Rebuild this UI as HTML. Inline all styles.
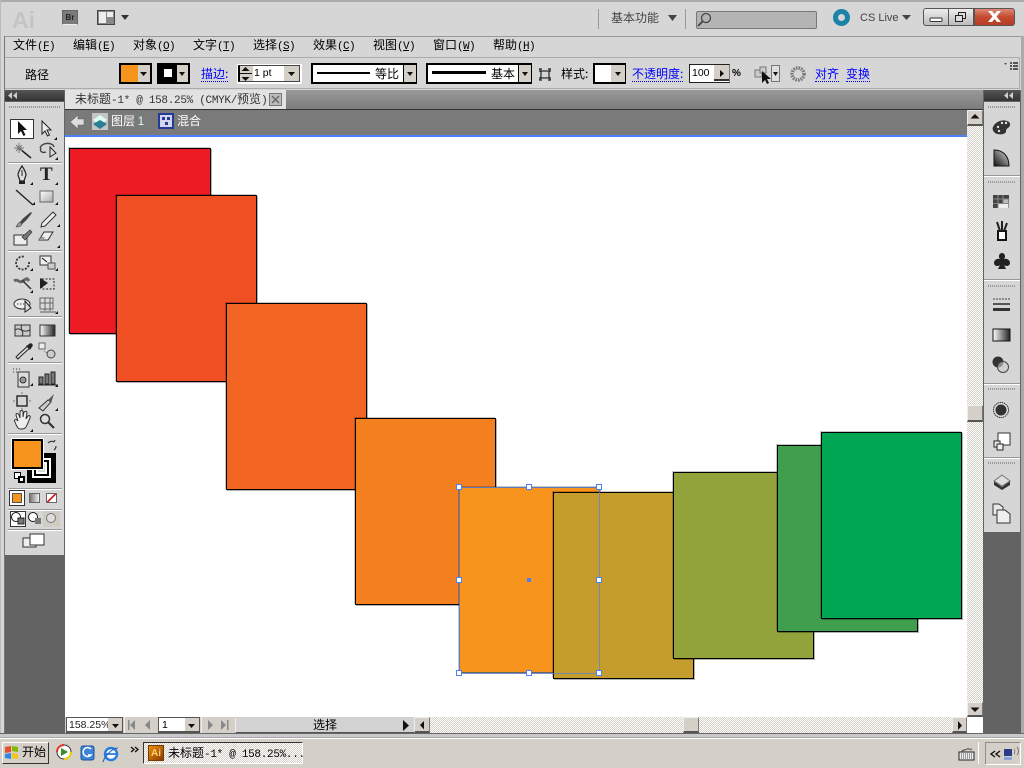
<!DOCTYPE html>
<html lang="zh"><head><meta charset="utf-8"><title>Illustrator</title>
<style>
html,body{margin:0;padding:0}
body{width:1024px;height:768px;position:relative;overflow:hidden;background:#d6d6d6;font:12px/14px "WenQuanYi Zen Hei","Noto Sans CJK SC","Liberation Sans",sans-serif;color:#000}
div,span.a{position:absolute;box-sizing:border-box}
.t{white-space:nowrap}
.m{top:38px;height:14px}
.m span{font:11px/14px "Liberation Mono",monospace;letter-spacing:-.6px}
.mono{font:11px/14px "Liberation Mono",monospace;letter-spacing:-.3px}
.l{color:#00f;border-bottom:1px dotted #00f;line-height:14px;white-space:nowrap}
.box{border:2px solid #000;background:#fff}
.s{border:2px solid #000}
.sep{left:8px;width:54px;height:2px;background:#fff;border-top:1px solid #999}
.ck{background:repeating-conic-gradient(#fff 0 25%,#d4d0c8 0 50%) 0 0/2px 2px}
.h{width:6px;height:6px;background:#fff;border:1px solid #4f80f0}
.sb{background:#d4d0c8;border-right:1px solid #777;border-bottom:2px solid #555;border-top:1px solid #eee;border-left:1px solid #eee}
.r{border:1px solid #000;box-shadow:-1px -1px 0 rgba(0,0,0,.22),1px 1px 0 rgba(0,0,0,.3)}
.dot{height:2px;background:repeating-linear-gradient(90deg,#999 0 1px,transparent 1px 2px)}
svg{position:absolute;left:0;top:0}
</style></head><body>

<!-- window frame -->
<div style="left:0;top:0;width:1024px;height:2px;background:#aaa"></div>
<div style="left:5px;top:36px;width:1019px;height:1px;background:#999"></div>
<div style="left:4px;top:57px;width:1016px;height:32px;border:1px solid #aaa;border-left:1px solid #777;background:#d6d6d6"></div>
<div style="left:0;top:0;width:1px;height:738px;background:#bbb"></div>
<div style="left:4px;top:36px;width:1px;height:698px;background:#777"></div>
<div style="left:1021px;top:36px;width:3px;height:700px;background:#aaa"></div>

<div class="t" style="left:12px;top:7px;font:bold 23px/26px 'Liberation Sans',sans-serif;color:#c4c4c4">Ai</div>
<div style="left:62px;top:10px;width:16px;height:15px;background:#7b7b7b;border:1px solid #666;border-bottom-color:#eee;color:#222;font:bold 8px/13px 'Liberation Sans',sans-serif;text-align:center">Br</div>
<div style="left:97px;top:10px;width:18px;height:15px;border:1px solid #444;background:#888"></div>
<div style="left:99px;top:12px;width:7px;height:11px;background:#eee"></div>
<div style="left:107px;top:12px;width:6px;height:5px;background:#eee"></div>
<div class="t" style="left:611px;top:11px;color:#444">基本功能</div>
<div style="left:598px;top:9px;width:1px;height:20px;background:#999"></div>
<div style="left:685px;top:9px;width:1px;height:20px;background:#999"></div>
<div style="left:696px;top:11px;width:121px;height:18px;background:#b4b4b4;border:1px solid #777;border-radius:2px"></div>
<div class="t" style="left:860px;top:11px;color:#444;font:11px/14px 'Liberation Sans',sans-serif">CS Live</div>
<div style="left:923px;top:8px;width:26px;height:18px;background:linear-gradient(#eee,#bbb);border:1px solid #555;border-radius:3px 0 0 3px"></div>
<div style="left:948px;top:8px;width:26px;height:18px;background:linear-gradient(#eee,#bbb);border:1px solid #555"></div>
<div style="left:974px;top:8px;width:41px;height:18px;background:linear-gradient(#dd8a76,#c34a30 50%,#b83d26);border:1px solid #555;border-radius:0 3px 3px 0"></div>

<!-- menu -->
<div class="t m" style="left:13px">文件<span>(<u>F</u>)</span></div>
<div class="t m" style="left:73px">编辑<span>(<u>E</u>)</span></div>
<div class="t m" style="left:133px">对象<span>(<u>O</u>)</span></div>
<div class="t m" style="left:193px">文字<span>(<u>T</u>)</span></div>
<div class="t m" style="left:253px">选择<span>(<u>S</u>)</span></div>
<div class="t m" style="left:313px">效果<span>(<u>C</u>)</span></div>
<div class="t m" style="left:373px">视图<span>(<u>V</u>)</span></div>
<div class="t m" style="left:433px">窗口<span>(<u>W</u>)</span></div>
<div class="t m" style="left:493px">帮助<span>(<u>H</u>)</span></div>

<!-- control bar -->
<div class="t" style="left:25px;top:68px">路径</div>
<div class="s" style="left:119px;top:63px;width:33px;height:21px;background:#d4d0c8"><div style="left:0;top:0;width:17px;height:17px;background:#f7941d"></div></div>
<div class="s" style="left:157px;top:63px;width:33px;height:21px;background:#d4d0c8"><div style="left:0;top:0;width:18px;height:17px;background:#000"></div><div style="left:5px;top:4px;width:8px;height:8px;background:#fff"></div></div>
<div class="l" style="left:201px;top:67px">描边:</div>
<div style="left:237px;top:64px;width:65px;height:20px;background:#fff"></div>
<div style="left:238px;top:65px;width:62px;height:17px;background:#d4d0c8;border:1px solid #444;border-left:2px solid #000"></div>
<div style="left:253px;top:66px;width:31px;height:15px;background:#fff;font:10.5px/15px 'Liberation Sans',sans-serif;padding-left:1px">1 pt</div>
<div class="box" style="left:311px;top:63px;width:106px;height:21px"></div>
<div style="left:317px;top:72px;width:53px;height:2px;background:#000"></div>
<div class="t" style="left:375px;top:67px">等比</div>
<div style="left:403px;top:65px;width:13px;height:17px;background:#d4d0c8;border-left:1px solid #000"></div>
<div class="box" style="left:426px;top:63px;width:106px;height:21px"></div>
<div style="left:432px;top:71px;width:54px;height:3px;background:#000"></div>
<div class="t" style="left:491px;top:67px">基本</div>
<div style="left:518px;top:65px;width:13px;height:17px;background:#d4d0c8;border-left:1px solid #000"></div>
<div class="t" style="left:561px;top:67px">样式:</div>
<div class="box" style="left:593px;top:63px;width:33px;height:21px"></div>
<div style="left:611px;top:65px;width:14px;height:17px;background:#d4d0c8"></div>
<div class="l" style="left:632px;top:67px">不透明度:</div>
<div style="left:689px;top:64px;width:41px;height:19px;background:#fff;border:1px solid #222;border-right-color:#777;font:10.5px/16px 'Liberation Sans',sans-serif;padding-left:2px">100</div>
<div style="left:714px;top:65px;width:15px;height:16px;background:#d4d0c8;border-bottom:2px solid #333"></div>
<div class="t" style="left:732px;top:67px;font:bold 10px/14px 'Liberation Sans',sans-serif">%</div>
<div style="left:771px;top:65px;width:9px;height:17px;background:#ddd;border:1px solid #777"></div>
<div class="l" style="left:815px;top:67px">对齐</div>
<div class="l" style="left:846px;top:67px">变换</div>

<!-- left dock -->
<div style="left:5px;top:90px;width:60px;height:644px;background:#636363"></div>
<div style="left:5px;top:90px;width:59px;height:11px;background:linear-gradient(#555,#333)"></div>
<div style="left:5px;top:102px;width:59px;height:453px;background:#d6d6d6"></div>
<div class="dot" style="left:9px;top:106px;width:51px"></div>
<div style="left:10px;top:119px;width:24px;height:20px;background:#fff;border:1px solid #333"></div>
<div class="sep" style="top:162px"></div>
<div class="sep" style="top:250px"></div>
<div class="sep" style="top:316px"></div>
<div class="sep" style="top:362px"></div>
<div class="sep" style="top:433px"></div>
<div class="sep" style="top:488px"></div>
<div class="sep" style="top:509px"></div>
<div class="sep" style="top:529px"></div>
<div class="t" style="left:40px;top:165px;font:bold 19px/20px 'Liberation Serif',serif;color:#222">T</div>
<!-- fill/stroke -->
<div style="left:27px;top:453px;width:29px;height:30px;background:#000"></div>
<div style="left:32px;top:458px;width:19px;height:20px;border:2px solid #fff;background:#000"></div>
<div style="left:36px;top:462px;width:11px;height:12px;background:#d6d6d6;border:2px solid #fff"></div>
<div style="left:12px;top:439px;width:31px;height:30px;background:#f7941d;border:2px solid #000;outline:1px solid #fff"></div>
<div style="left:14px;top:472px;width:7px;height:7px;background:#fff;border:1px solid #000"></div>
<div style="left:18px;top:476px;width:7px;height:7px;background:#fff;border:2px solid #000"></div>
<div style="left:9px;top:490px;width:16px;height:16px;background:#fff;border:1px solid #333"></div>
<div style="left:12px;top:493px;width:10px;height:10px;background:#f7941d;border:1px solid #555"></div>
<div style="left:29px;top:493px;width:11px;height:10px;background:linear-gradient(90deg,#777,#eee);border:1px solid #666"></div>
<div style="left:46px;top:493px;width:11px;height:10px;background:linear-gradient(135deg,#fff 42%,#d2202f 42% 58%,#fff 58%);border:1px solid #666"></div>
<div style="left:10px;top:511px;width:16px;height:16px;background:#fff;border:1px solid #333"></div>
<div style="left:43px;top:511px;width:17px;height:16px;background:#cfccc4"></div>

<!-- right dock -->
<div style="left:983px;top:90px;width:38px;height:644px;background:#636363"></div>
<div style="left:984px;top:90px;width:36px;height:11px;background:linear-gradient(#555,#333)"></div>
<div style="left:984px;top:102px;width:36px;height:430px;background:#d6d6d6"></div>
<div style="left:984px;top:175px;width:36px;height:2px;background:#999;border-bottom:1px solid #fff"></div>
<div style="left:984px;top:279px;width:36px;height:2px;background:#999;border-bottom:1px solid #fff"></div>
<div style="left:984px;top:383px;width:36px;height:2px;background:#999;border-bottom:1px solid #fff"></div>
<div style="left:984px;top:457px;width:36px;height:2px;background:#999;border-bottom:1px solid #fff"></div>
<div class="dot" style="left:988px;top:106px;width:27px"></div>
<div class="dot" style="left:988px;top:181px;width:27px"></div>
<div class="dot" style="left:988px;top:285px;width:27px"></div>
<div class="dot" style="left:988px;top:388px;width:27px"></div>
<div class="dot" style="left:988px;top:462px;width:27px"></div>

<!-- tab area -->
<div style="left:65px;top:90px;width:918px;height:19px;background:linear-gradient(#999,#7c7c7c)"></div>
<div style="left:65px;top:90px;width:221px;height:19px;background:#e2e2e2"></div>
<div class="t" style="left:75px;top:92px;color:#333">未标题<span class="mono">-1* @ 158.25% (CMYK/</span>预览<span class="mono">)</span></div>
<div style="left:269px;top:93px;width:13px;height:13px;background:#bbb;border:1px solid #777"></div>
<div style="left:65px;top:109px;width:918px;height:1px;background:#333"></div>
<div style="left:65px;top:110px;width:918px;height:26px;background:#7a7a7a"></div>
<div style="left:65px;top:135px;width:902px;height:2px;background:#4d80ff"></div>
<div class="t" style="left:111px;top:114px;color:#fff">图层 <span style="font:11.5px/14px 'Liberation Sans',sans-serif;color:#dff">1</span></div>
<div class="t" style="left:177px;top:114px;color:#fff">混合</div>
<div style="left:92px;top:113px;width:16px;height:17px;background:#c5c5c5"></div>
<div style="left:158px;top:113px;width:16px;height:16px;background:#d5d5ee;border:2px solid #223c96"></div>
<div style="left:162px;top:117px;width:3px;height:3px;background:#223c96"></div>
<div style="left:167px;top:117px;width:3px;height:3px;background:#223c96"></div>
<div style="left:165px;top:122px;width:3px;height:3px;background:#223c96"></div>

<!-- canvas -->
<div style="left:65px;top:137px;width:902px;height:580px;background:#fff"></div>
<div class="r" style="left:69px;top:148px;width:142px;height:186px;background:#ed1c24"></div>
<div class="r" style="left:116px;top:195px;width:141px;height:187px;background:#f04e23"></div>
<div class="r" style="left:226px;top:303px;width:141px;height:187px;background:#f36523"></div>
<div class="r" style="left:355px;top:418px;width:141px;height:187px;background:#f58020"></div>
<div class="r" style="left:459px;top:487px;width:141px;height:186px;background:#f7941d;border-color:#666"></div>
<div class="r" style="left:553px;top:492px;width:141px;height:187px;background:#c49d2d"></div>
<div class="r" style="left:673px;top:472px;width:141px;height:187px;background:#93a33c"></div>
<div class="r" style="left:777px;top:445px;width:141px;height:187px;background:#3f9f4e"></div>
<div class="r" style="left:821px;top:432px;width:141px;height:187px;background:#00a651"></div>
<!-- selection -->
<div style="left:459px;top:487px;width:141px;height:187px;border:1px solid rgba(91,130,216,.75)"></div>
<div class="h" style="left:456px;top:484px"></div><div class="h" style="left:526px;top:484px"></div><div class="h" style="left:596px;top:484px"></div>
<div class="h" style="left:456px;top:577px"></div><div class="h" style="left:596px;top:577px"></div>
<div class="h" style="left:456px;top:670px"></div><div class="h" style="left:526px;top:670px"></div><div class="h" style="left:596px;top:670px"></div>
<div style="left:527px;top:578px;width:4px;height:4px;background:#4f80f0"></div>

<!-- v scrollbar -->
<div class="ck" style="left:967px;top:110px;width:16px;height:607px"></div>
<div class="sb" style="left:967px;top:110px;width:16px;height:16px"></div>
<div class="sb" style="left:967px;top:405px;width:16px;height:17px"></div>
<div class="sb" style="left:967px;top:702px;width:16px;height:15px"></div>
<div style="left:967px;top:717px;width:16px;height:16px;background:#fff"></div>

<!-- status bar -->
<div style="left:65px;top:717px;width:902px;height:16px;background:#d4d0c8"></div>
<div class="ck" style="left:430px;top:717px;width:522px;height:16px"></div>
<div class="sb" style="left:683px;top:717px;width:16px;height:16px"></div>
<div class="sb" style="left:952px;top:717px;width:15px;height:16px"></div>
<div class="sb" style="left:414px;top:717px;width:16px;height:16px"></div>
<div style="left:66px;top:717px;width:57px;height:16px;background:#fff;border:1px solid #555;border-width:1px 1px 2px 1px;font:10.5px/14px 'Liberation Sans',sans-serif;padding-left:2px;color:#222">158.25%</div>
<div style="left:108px;top:718px;width:14px;height:13px;background:#d4d0c8"></div>
<div style="left:158px;top:717px;width:42px;height:16px;background:#fff;border:1px solid #555;border-width:1px 1px 2px 1px;font:10.5px/14px 'Liberation Sans',sans-serif;padding-left:3px">1</div>
<div style="left:185px;top:718px;width:14px;height:13px;background:#d4d0c8"></div>
<div style="left:124px;top:717px;width:1px;height:16px;background:#eee"></div>
<div style="left:201px;top:717px;width:1px;height:16px;background:#eee"></div>
<div style="left:235px;top:718px;width:179px;height:15px;background:#d2d2d2;border-left:1px solid #eee;border-bottom:1px solid #555"></div>
<div class="t" style="left:313px;top:718px">选择</div>

<!-- bottom frame -->
<div style="left:0;top:733px;width:1024px;height:1px;background:#666"></div>
<div style="left:0;top:734px;width:1024px;height:4px;background:#c9c9c9;border-bottom:1px solid #aaa"></div>

<!-- taskbar -->
<div style="left:0;top:738px;width:1024px;height:30px;background:#d4d0c8;border-top:1px solid #fff"></div>
<div style="left:2px;top:742px;width:47px;height:22px;background:#d4d0c8;border:1px solid #fff;border-right:1px solid #333;border-bottom:1px solid #333"></div>
<div class="t" style="left:22px;top:745px">开始</div>
<div class="ck" style="left:143px;top:742px;width:160px;height:22px;border:1px solid #333;border-right-color:#fff;border-bottom-color:#fff"></div>
<div style="left:148px;top:745px;width:16px;height:16px;background:linear-gradient(135deg,#e8900c,#8a3a00);color:#ffcf70;font:bold 10px/16px 'Liberation Sans',sans-serif;text-align:center;border:1px solid #7a3a00">Ai</div>
<div class="t" style="left:168px;top:746px">未标题<span class="mono">-1* @ 158.25%...</span></div>
<div style="left:978px;top:742px;width:1px;height:22px;background:#999;border-right:1px solid #fff"></div>
<div style="left:985px;top:742px;width:36px;height:23px;border:1px solid #8f8f8f;border-right-color:#fff;border-bottom-color:#fff"></div>

<!-- icons -->
<svg width="1024" height="768" viewBox="0 0 1024 768">
<defs><g id="tr"><path d="M0 3 L3 3 L3 0 Z" fill="#111"/></g></defs>
<!-- top bar -->
<path d="M121 15h8l-4 5z" fill="#333"/>
<path d="M668 15h9l-4.500 6z" fill="#444"/>
<circle cx="841.500" cy="17.500" r="6" fill="none" stroke="#1b82a8" stroke-width="5"/>
<path d="M902 15h9l-4.500 5z" fill="#444"/>
<g fill="none" stroke="#444" stroke-width="1.300"><circle cx="706" cy="18" r="4.500"/><path d="M702.500 21.500l-4.500 4.500" stroke-width="1.800"/></g>
<rect x="930" y="18" width="12" height="3.500" rx="1" fill="#fff" stroke="#333"/>
<g fill="#ddd" stroke="#222"><rect x="958.500" y="12.500" width="7" height="6"/><rect x="955.500" y="15.500" width="7" height="6"/></g>
<path d="M988 11l4 0 2.500 3 2.500-3 4 0-4.500 5.500 4.500 5.500-4 0-2.500-3-2.500 3-4 0 4.500-5.500z" fill="#fff"/>
<!-- control bar -->
<g fill="#111"><path d="M140 72h7l-3.500 4z"/><path d="M179 72h6l-3 4z"/><path d="M288 72h7l-3.500 4z"/><path d="M407 72h6l-3 4z"/><path d="M522 72h6l-3 4z"/><path d="M615 72h6l-3 4z"/><path d="M773 72h5l-2.500 4z"/><path d="M720 70l4 3.500-4 3.500z"/></g>
<rect x="284.500" y="66.500" width="15" height="14" fill="#d4d0c8" fill-opacity="0"/>
<g fill="#111"><path d="M245.500 67l4 4h-8z"/><path d="M245.500 81l4-4h-8z"/><rect x="240" y="73" width="12" height="1"/></g>
<g fill="none" stroke="#222" stroke-width="1.200"><rect x="541" y="71" width="8" height="7"/><path d="M539 69h3M548 69h3M539 80h3M548 80h3M540 69v3M550 69v3M540 77v3M550 77v3"/></g>
<rect x="755" y="70" width="7" height="7" fill="#ccc" stroke="#777"/><rect x="760" y="67" width="6" height="6" fill="#ccc" stroke="#777"/>
<path d="M762 71l0 12 3-3 2 4 2-1-2-4 4 0z" fill="#111"/>
<circle cx="798" cy="74" r="6" fill="none" stroke="#777" stroke-width="3.500" stroke-dasharray="1.600 1"/>
<g fill="#555"><path d="M1004 63h3l-1.500 2z"/><path d="M1010 62h2v2h-2zM1013 62h5v2h-5zM1010 65h2v2h-2zM1013 65h5v2h-5zM1010 68h2v2h-2zM1013 68h5v2h-5z"/></g>
<g fill="#ccc"><path d="M12 92l-4 3.500 4 3.500zM17 92l-4 3.500 4 3.500z"/><path d="M1008 92l-4 3.500 4 3.500zM1013 92l-4 3.500 4 3.500z"/></g>
<!-- breadcrumb -->
<path d="M70 122l8-7v4h6v6h-6v4z" fill="#ddd" stroke="#666" stroke-width=".6"/>
<path d="M100 115l7 5-7 5-7-5z" fill="#dfe"/><path d="M100 120l7 4-7 5-7-5z" fill="#2b7f93"/>
<!-- tab close -->
<path d="M272 96l7 7M279 96l-7 7" stroke="#666" stroke-width="1.400"/>
<!-- tools -->
<path d="M18 121v13l3-3 2.500 5 2-1-2.500-5h4z" fill="#111"/>
<path d="M42 121v13l3-3 2.500 5 2-1-2.500-5h4z" fill="#eee" stroke="#222"/>
<path d="M20 149l11 9" stroke="#222" stroke-width="1.500"/>
<path d="M16 145l6 6M22 145l-6 6M19 143v10M14 148h10" stroke="#777" stroke-width="1"/>
<path d="M40 148c2-6 13-6 14-1" fill="none" stroke="#444" stroke-width="1.400"/><path d="M41 148c-2 4 2 5 5 4" fill="none" stroke="#444" stroke-width="1.400"/><path d="M50 147v10l6-4z" fill="#ddd" stroke="#222"/>
<path d="M22 166c-2 3-4 7-4 9l2 6h4l2-6c0-2-2-6-4-9z" fill="#ddd" stroke="#222" stroke-width="1.200"/><path d="M22 170v6" stroke="#222"/><rect x="19" y="181" width="6" height="3" fill="#222"/>
<path d="M16 190l17 15" stroke="#222" stroke-width="1.400"/>
<rect x="40" y="191" width="13" height="11" fill="url(#g1)" stroke="#666"/>
<linearGradient id="g1" x1="0" y1="0" x2="1" y2="1"><stop offset="0" stop-color="#fff"/><stop offset="1" stop-color="#aaa"/></linearGradient>
<path d="M31 212c-4 3-9 7-11 10l2 2c3-2 7-7 10-11z" fill="#444"/><path d="M20 222c-2 1-3 3-4 5 3 0 6-1 6-3z" fill="#999" stroke="#444" stroke-width=".6"/>
<path d="M53 212l3 3-11 11-4 1 1-4z" fill="#eee" stroke="#333"/>
<rect x="14" y="235" width="13" height="10" fill="#eee" stroke="#333"/><path d="M22 237l8-7 2 2-7 8z" fill="#777" stroke="#333" stroke-width=".7"/>
<path d="M44 232h9l-5 8h-9z" fill="#eee" stroke="#333"/><path d="M39 240l2-3h4l-2 3z" fill="#999"/>
<path d="M29 262a6.500 6.500 0 1 1-4-5" fill="none" stroke="#333" stroke-width="1.800" stroke-dasharray="2 1.400"/>
<rect x="40" y="256" width="11" height="9" fill="#eee" stroke="#333"/><rect x="48" y="263" width="7" height="6" fill="#ccc" stroke="#555"/><path d="M42 258l5 4" stroke="#111"/>
<path d="M14 281c4-3 5 3 9 0s4-3 6 0" fill="none" stroke="#666" stroke-width="3"/><path d="M22 280l9 9" stroke="#333" stroke-width="1.500"/>
<rect x="42" y="279" width="12" height="10" fill="none" stroke="#222" stroke-dasharray="2 1.500"/><path d="M40 278v11l8-6z" fill="#222"/>
<ellipse cx="22" cy="304" rx="8" ry="5" fill="#eee" stroke="#333"/><path d="M25 301v11l6-4z" fill="#ddd" stroke="#222"/><path d="M17 304h7" stroke="#333" stroke-dasharray="1.500 1.500"/>
<path d="M40 298h13v11H40z M45 298v14M50 298v14M40 303h13" fill="#ddd" stroke="#666" fill-opacity=".5"/><path d="M40 312h16" stroke="#999" stroke-width="2"/>
<rect x="15" y="325" width="15" height="11" fill="#ccc" stroke="#333"/><path d="M15 330c5-4 7 4 15 0M22 325c-3 4 3 7 0 11" fill="none" stroke="#333"/>
<rect x="40" y="325" width="15" height="11" fill="url(#g2)" stroke="#333"/>
<linearGradient id="g2"><stop offset="0" stop-color="#fff"/><stop offset="1" stop-color="#222"/></linearGradient>
<path d="M30 344l2 2-11 10-3 3-2-2 3-3z" fill="#ddd" stroke="#222"/><path d="M26 346l4 4 3-5-2-2z" fill="#222"/>
<rect x="39" y="343" width="6" height="6" fill="#eee" stroke="#666"/><circle cx="51" cy="354" r="4" fill="#ccc" stroke="#444"/><path d="M44 351l3 2" stroke="#777" stroke-dasharray="1 1"/>
<rect x="18" y="372" width="11" height="15" fill="#ddd" stroke="#333"/><circle cx="23" cy="380" r="3" fill="#999" stroke="#333"/><path d="M13 369h1M16 369h1M19 369h1M13 372h1M16 372h1" stroke="#333"/>
<path d="M39 384v-7h4v7zM45 384v-10h4v10zM51 384v-12h4v12z" fill="#777" stroke="#222"/><path d="M38 385h19" stroke="#222"/>
<rect x="17" y="396" width="10" height="10" fill="none" stroke="#222" stroke-width="1.400"/><path d="M22 392v2M22 408v2M13 401h2M29 401h2" stroke="#777"/>
<path d="M39 408l9-8 3 2-8 9z" fill="#ccc" stroke="#333"/><path d="M48 400l6-6-3 9z" fill="#555"/>
<path d="M15 422c-2-2 1-3 2-2l1 1-2-6c0-2 2-2 3 0l1 3v-6c0-2 3-2 3 0v5l1-5c1-1 3-1 3 1l-1 6 2-3c1-1 3 0 2 2l-3 7c-1 3-3 4-5 4h-2c-2 0-4-4-5-7z" fill="#eee" stroke="#333"/>
<circle cx="45" cy="419" r="4.500" fill="#ddd" stroke="#333" stroke-width="1.500"/><path d="M48 422l6 6" stroke="#333" stroke-width="2.200"/>
<path d="M48 443a5 5 0 0 1 6-1M54 442l1-2M56 446a5 5 0 0 1-2 4" fill="none" stroke="#333" stroke-width="1.200"/>
<g transform="translate(54 137)"><use href="#tr"/></g>
<g><use href="#tr" x="55" y="157"/><use href="#tr" x="30" y="182"/><use href="#tr" x="55" y="182"/><use href="#tr" x="32" y="202"/><use href="#tr" x="55" y="202"/><use href="#tr" x="57" y="224"/><use href="#tr" x="57" y="245"/><use href="#tr" x="30" y="268"/><use href="#tr" x="55" y="268"/><use href="#tr" x="30" y="290"/><use href="#tr" x="55" y="311"/><use href="#tr" x="30" y="357"/><use href="#tr" x="30" y="383"/><use href="#tr" x="55" y="384"/><use href="#tr" x="55" y="408"/><use href="#tr" x="30" y="429"/></g>
<circle cx="16" cy="517" r="4.500" fill="#fff" stroke="#111"/><rect x="18" y="518" width="6" height="6" fill="#777" stroke="#222"/>
<circle cx="33" cy="517" r="4.500" fill="#fff" stroke="#111"/><rect x="35" y="518" width="6" height="6" fill="#777"/>
<circle cx="51" cy="518" r="4.500" fill="#ddd" stroke="#777"/>
<rect x="23" y="538" width="13" height="9" fill="#eee" stroke="#333"/><rect x="30" y="534" width="14" height="11" fill="#fff" stroke="#333"/>
<!-- right dock icons -->
<path d="M993 127c2-5 9-8 14-6 4 1 4 5 1 7-2 1-2 3-2 4-2 3-8 3-11 1-2-2-3-4-2-6z" fill="#333"/>
<g fill="#ddd"><circle cx="998" cy="127" r="1.200"/><circle cx="1002" cy="123" r="1.200"/><circle cx="1006" cy="123" r="1.200"/><circle cx="999" cy="131" r="1.200"/></g>
<path d="M994 150c9 0 15 6 15 16h-15z" fill="url(#g3)" stroke="#111"/>
<linearGradient id="g3" x1="0" y1="1" x2="1" y2="0"><stop offset="0" stop-color="#111"/><stop offset="1" stop-color="#ddd"/></linearGradient>
<rect x="993" y="195" width="16" height="13" fill="#444"/><path d="M993.500 199h16M993 203.500h16M998 195v13M1003 195v13" stroke="#999" stroke-width=".8"/><rect x="1003.500" y="199.500" width="5" height="3.500" fill="#bbb"/><rect x="998.500" y="204" width="10" height="4" fill="#eee"/>
<rect x="998" y="231" width="8" height="9" fill="#fff" stroke="#111" stroke-width="2"/><path d="M997 222l3 9M1002 221v10M1007 223l-3 8" stroke="#222" stroke-width="2"/>
<path d="M1002 253c-3 0-4 4-2 6-3-1-6 1-6 4s4 4 6 2l-2 4h8l-2-4c2 2 6 1 6-2s-3-5-6-4c2-2 1-6-2-6z" fill="#222"/>
<path d="M993 299h17" stroke="#444" stroke-dasharray="2 1"/><rect x="993" y="303" width="17" height="2" fill="#555"/><rect x="993" y="308" width="17" height="3" fill="#333"/>
<rect x="993" y="329" width="17" height="12" fill="url(#g4)" stroke="#111"/>
<linearGradient id="g4"><stop offset="0" stop-color="#fff"/><stop offset="1" stop-color="#222"/></linearGradient>
<circle cx="998" cy="362" r="5.500" fill="#333"/><circle cx="1003" cy="367" r="5.500" fill="#ccc" fill-opacity=".6" stroke="#444"/>
<circle cx="1001" cy="410" r="7.500" fill="#ddd" stroke="#333" stroke-dasharray="1.500 .6"/><circle cx="1001" cy="410" r="5.500" fill="#333"/>
<rect x="998" y="433" width="12" height="12" fill="#fff" stroke="#333"/><rect x="994" y="441" width="6" height="6" fill="#eee" stroke="#222"/><rect x="997" y="444" width="6" height="6" fill="#eee" stroke="#222"/>
<path d="M994 481l8 6 8-6 0 4-8 5-8-5z" fill="#333"/><path d="M1002 475l8 6-8 5-8-5z" fill="#ddd" stroke="#777"/>
<path d="M993 504h6l4 3v8h-10z" fill="#e8e8e8" stroke="#333"/><path d="M997 510h8l5 4v9h-13z" fill="#eee" stroke="#333"/>
<!-- scroll arrows -->
<g fill="#111"><path d="M975 114l4.500 4.500h-9z"/><path d="M975 712l-4.500-4.500h9z"/><path d="M958 721l4 4.500-4 4.500z"/><path d="M424 721l-4 4 4 4.500z"/><path d="M403 720l6 5.500-6 5.500z"/><path d="M112 724h7l-3.500 4z"/><path d="M188 724h7l-3.500 4z"/></g>
<g fill="#888"><path d="M128 720h1.500v10H128zM135 720v10l-5-5z"/><path d="M150 720v10l-5-5z"/><path d="M208 720v10l5-5z"/><path d="M221 720v10l5-5zM227 720h1.500v10H227z"/></g>
<!-- taskbar icons -->
<g><path d="M5 747l6-1v6l-6 1z" fill="#e5502a"/><path d="M12 746l6 1v5l-6-1z" fill="#7fba00"/><path d="M5 754l6-1v6l-6-1z" fill="#2b8ae6"/><path d="M12 753l6 1v5l-6-1z" fill="#f5c518"/></g>
<circle cx="64" cy="752" r="7" fill="#fff" stroke="#333"/><path d="M57 752a7 7 0 0 1 7-7" stroke="#d33" stroke-width="2" fill="none"/><path d="M71 752a7 7 0 0 1-7 7" stroke="#ec0" stroke-width="2" fill="none"/><path d="M61 748l7 4-7 4z" fill="#3a8a2a"/>
<rect x="81" y="746" width="13" height="14" rx="2" fill="#3b86d8" stroke="#1c4f99"/><path d="M91 749a4.500 4.500 0 1 0 0 6h-3" fill="none" stroke="#fff" stroke-width="1.500"/>
<circle cx="111" cy="754" r="6" fill="#fff" stroke="#2a7de0" stroke-width="2.400"/><path d="M106 754h10" stroke="#2a7de0" stroke-width="1.800"/><path d="M103 762c2-7 10-14 15-14" fill="none" stroke="#1e60b8" stroke-width="1.100"/>
<path d="M131 747l3 2.500-3 2.500M135 747l3 2.500-3 2.500" fill="none" stroke="#111" stroke-width="1.300"/>
<rect x="959" y="752" width="15" height="8" fill="#eee" stroke="#222"/><path d="M961 754h11M961 756h11M961 758h11" stroke="#444" stroke-dasharray="1 1"/><path d="M962 752c0-3 3-1 5-3 1-1 2 1 5 0" fill="none" stroke="#222" stroke-width=".8"/>
<path d="M995 751l-4 3 4 3M1000 751l-4 3 4 3" fill="none" stroke="#111" stroke-width="1.400"/>
<rect x="1004" y="749" width="8" height="7" fill="#2c3a8c"/><rect x="1004" y="757" width="8" height="3" fill="#8fa3d8"/><path d="M1014 749a4 4 0 0 1 0 5M1017 747a6 6 0 0 1 0 8" stroke="#667" fill="none" stroke-width=".8"/>
</svg>
</body></html>
